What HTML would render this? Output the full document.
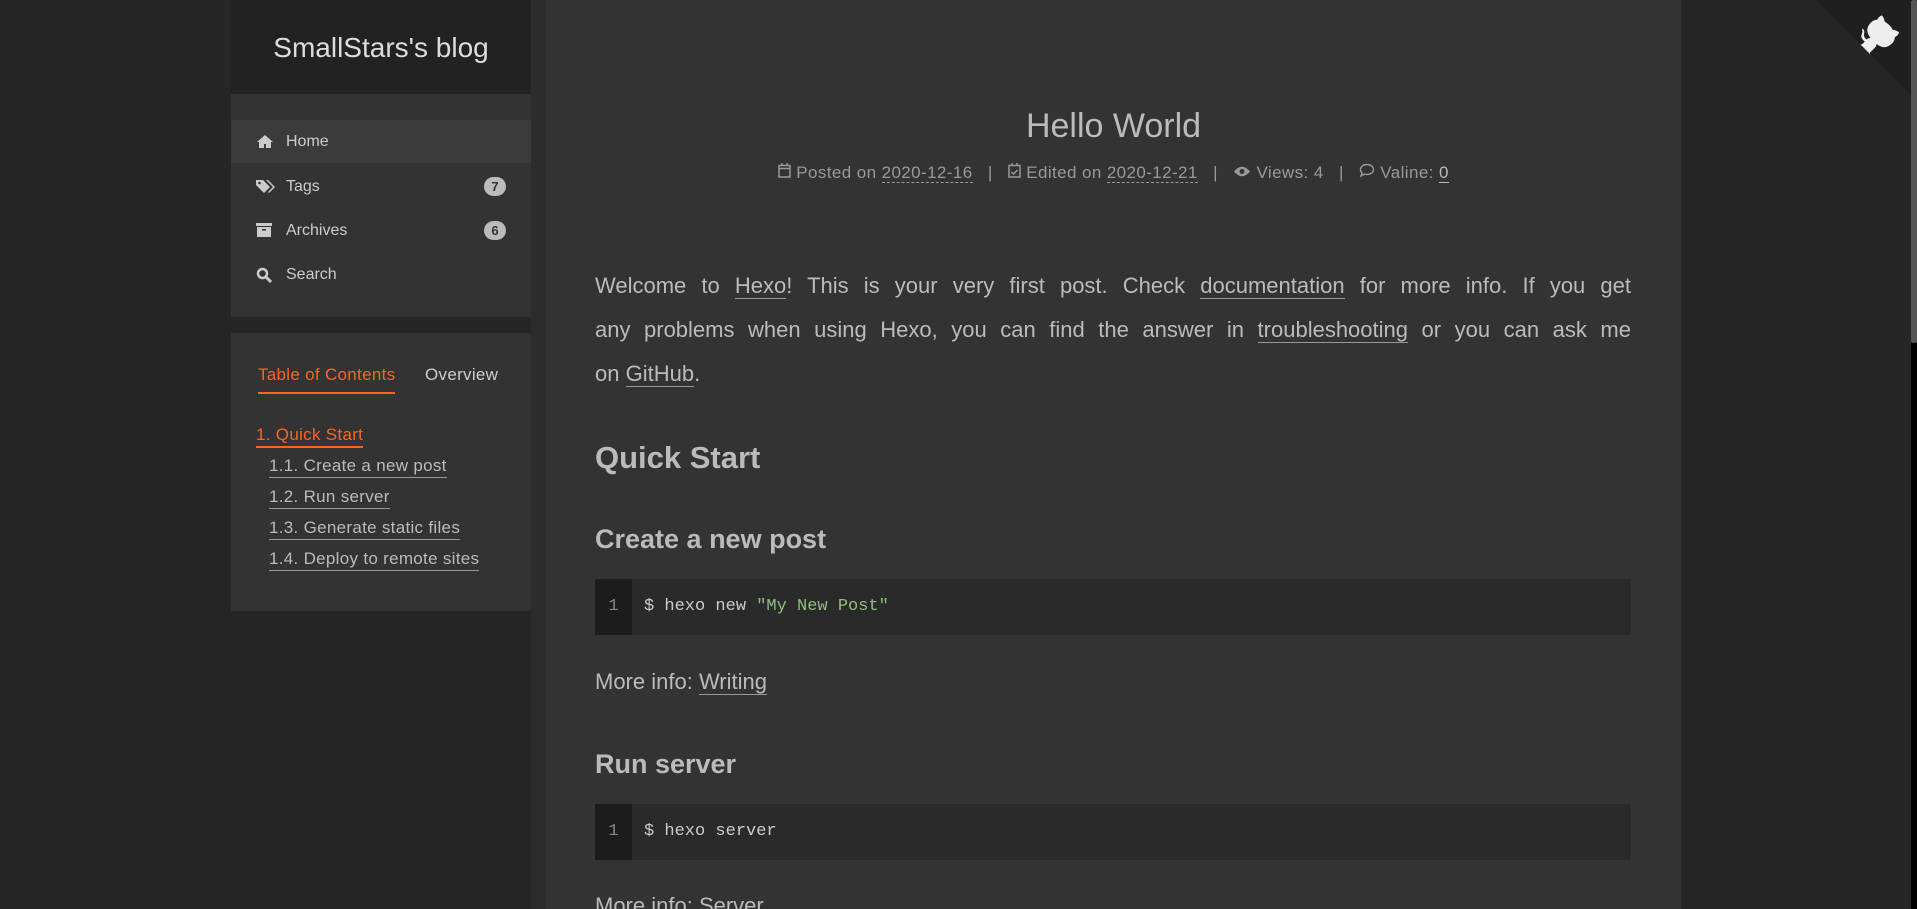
<!DOCTYPE html>
<html><head><meta charset="utf-8"><style>
*{margin:0;padding:0;box-sizing:border-box}
html,body{width:1917px;height:909px;overflow:hidden;background:#262626;font-family:"Liberation Sans",sans-serif;color:#bbb}
#w{position:relative;width:1917px;height:909px;overflow:hidden}
.abs{position:absolute}
a{color:#bbb;text-decoration:none}
.sb{left:231px;width:300px}
.head{top:0;height:94px;background:#222;text-align:center;line-height:96px;font-size:28px;color:#ddd}
.menu{top:94px;height:223px;background:#333}
.mi{position:absolute;left:0;width:300px;height:43px;line-height:43px;font-size:16px;color:#ccc;padding-left:55px}
.mi svg{position:absolute;left:25px;top:14px}
.badge{position:absolute;right:25px;top:12px;width:22px;height:19px;border-radius:10px;background:#bbb;color:#333;font-size:13px;line-height:19px;text-align:center;padding:0;font-weight:bold}
.toc{top:333px;height:278px;background:#333}
.ti{position:absolute;font-size:17px;color:#bbb;border-bottom:1px solid #999;line-height:22px;letter-spacing:0.3px}
.main{left:546px;top:0;width:1135px;height:909px;background:#333}
.p{position:absolute;left:595px;width:1036px;font-size:22px;line-height:44px;color:#bbb}
.p div{text-align:justify;text-align-last:justify;white-space:nowrap;height:44px}
.p a{border-bottom:1px solid #999}
h2,h3{position:absolute;left:595px;color:#bbb;font-weight:bold}
.code{position:absolute;left:595px;width:1036px;height:56px;background:#2a2a2a;font-family:"Liberation Mono",monospace;font-size:17px;line-height:56px;color:#ccc}
.code .g{position:absolute;left:0;top:0;width:37px;height:56px;background:#1c1c1c;text-align:center;color:#888}
.code .c{position:absolute;left:49px}
.meta{position:absolute;left:546px;width:1135px;top:163px;text-align:center;font-size:17px;color:#999;letter-spacing:0.4px}
.meta u{text-decoration:none;border-bottom:1px dashed #999}
</style></head><body><div id="w">
<div class="abs" style="left:531px;top:0;width:15px;height:909px;background:#2c2c2c"></div>
<div class="abs sb head">SmallStars's blog</div>
<div class="abs sb menu">
 <div class="mi" style="top:26px;background:#3b3b3b"><svg width="18" height="15" viewBox="0 0 18 15"><path d="M9 1L1 8h2v6h5v-4h2v4h5V8h2z" fill="#ccc"/></svg>Home</div>
 <div class="mi" style="top:71px"><svg width="20" height="15" viewBox="0 0 20 15"><path d="M0 1h7l7 7-6 6-8-8z M10 1h2l7 7-6 6-1-1 5-5z" fill="#ccc"/><circle cx="3.5" cy="4" r="1.3" fill="#333"/></svg>Tags<span class="badge">7</span></div>
 <div class="mi" style="top:115px"><svg width="16" height="14" viewBox="0 0 16 14"><path d="M0 0h16v3H0zM1 4h14v10H1z" fill="#ccc"/><rect x="6" y="6" width="4" height="1.5" fill="#333"/></svg>Archives<span class="badge">6</span></div>
 <div class="mi" style="top:159px"><svg width="16" height="16" viewBox="0 0 16 16"><circle cx="6.5" cy="6.5" r="4.5" stroke="#ccc" stroke-width="2.5" fill="none"/><path d="M10 10l5 5" stroke="#ccc" stroke-width="3"/></svg>Search</div>
</div>
<div class="abs sb toc">
 <div class="ti" style="left:27px;top:31px;color:#fc6423;border-bottom:2px solid #fc6423;padding-bottom:6px">Table of Contents</div>
 <div class="ti" style="left:194px;top:31px;border:0;color:#ccc">Overview</div>
 <div class="ti" style="left:25px;top:91px;color:#fc6423;border-bottom:2px solid #fc6423">1. Quick Start</div>
 <div class="ti" style="left:38px;top:122px">1.1. Create a new post</div>
 <div class="ti" style="left:38px;top:153px">1.2. Run server</div>
 <div class="ti" style="left:38px;top:184px">1.3. Generate static files</div>
 <div class="ti" style="left:38px;top:215px">1.4. Deploy to remote sites</div>
</div>
<div class="abs main"></div>
<div class="abs" style="left:546px;top:107px;width:1135px;text-align:center;font-size:34px;color:#bbb">Hello World</div>
<div class="meta">
<svg width="13" height="15" viewBox="0 0 13 15"><rect x="1" y="2.5" width="11" height="11.5" fill="none" stroke="#999" stroke-width="1.5"/><path d="M1 5.5h11M4 0v3M9 0v3" stroke="#999" stroke-width="1.5"/></svg> Posted on <u>2020-12-16</u> &nbsp;&nbsp;|&nbsp;&nbsp; <svg width="13" height="15" viewBox="0 0 13 15"><rect x="1" y="2.5" width="11" height="11.5" fill="none" stroke="#999" stroke-width="1.5"/><path d="M4 0v3M9 0v3M3.5 9l2 2 4-4" stroke="#999" stroke-width="1.5" fill="none"/></svg> Edited on <u>2020-12-21</u> &nbsp;&nbsp;|&nbsp;&nbsp; <svg width="18" height="13" viewBox="0 0 18 13"><path d="M1 6.5Q9-3 17 6.5Q9 16 1 6.5z" fill="#999"/><circle cx="9" cy="6.5" r="2.5" fill="#333"/></svg> Views: 4 &nbsp;&nbsp;|&nbsp;&nbsp; <svg width="16" height="15" viewBox="0 0 16 15"><path d="M8 1.5c4 0 6.5 2.3 6.5 5s-2.5 5-6.5 5c-1 0-2-.2-2.7-.5L2 13l1-3C2 9 1.5 7.8 1.5 6.5 1.5 3.8 4 1.5 8 1.5z" fill="none" stroke="#999" stroke-width="1.4"/></svg> Valine: <span style="border-bottom:1px solid #bbb;color:#bbb">0</span>
</div>
<div class="p" style="top:264px">
<div>Welcome to <a>Hexo</a>! This is your very first post. Check <a>documentation</a> for more info. If you get</div>
<div>any problems when using Hexo, you can find the answer in <a>troubleshooting</a> or you can ask me</div>
<div style="text-align-last:left">on <a>GitHub</a>.</div>
</div>
<h2 style="top:440px;font-size:31px">Quick Start</h2>
<h3 style="top:524px;font-size:27px">Create a new post</h3>
<div class="code" style="top:579px"><div class="g">1</div><div class="c">$ hexo new <span style="color:#8fbf7f">"My New Post"</span></div></div>
<div class="p" style="top:660px">More info: <a>Writing</a></div>
<h3 style="top:749px;font-size:27px">Run server</h3>
<div class="code" style="top:804px"><div class="g">1</div><div class="c">$ hexo server</div></div>
<div class="p" style="top:884px">More info: <a>Server</a></div>
<svg class="abs" style="left:1816px;top:0" width="96" height="96" viewBox="0 0 250 250"><path d="M0,0 L250,250 L250,0 Z" fill="#1f1f1f"/><path d="M128.3,109.0 C113.8,99.7 119.0,89.6 119.0,89.6 C122.0,82.7 120.5,78.6 120.5,78.6 C119.2,72.0 123.4,76.3 123.4,76.3 C127.3,80.9 125.5,87.3 125.5,87.3 C122.9,97.6 130.6,101.9 134.4,103.2" fill="#eee"/><path d="M115,115 C114.9,115.1 118.7,116.5 119.8,115.4 L133.7,101.6 C136.9,99.2 139.9,98.4 142.2,98.6 C133.8,88 127.5,74.4 143.8,58 C148.5,53.4 154,51.2 159.7,51 C160.3,49.4 163.2,43.6 171.4,40.1 C171.4,40.1 176.1,42.5 178.8,56.2 C183.1,58.6 187.2,61.8 190.9,65.4 C194.5,69 197.7,73.2 200.1,77.6 C213.8,80.2 216.3,84.9 216.3,84.9 C212.7,93.1 206.9,96 205.4,96.6 C205.1,102.4 203,107.8 198.3,112.5 C181.9,128.9 168.3,122.5 157.7,114.1 C157.9,116.9 156.7,120.9 152.7,124.9 L141,136.5 C139.8,137.7 141.6,141.9 141.8,141.8 Z" fill="#eee"/></svg>
<div class="abs" style="left:1911px;top:0;width:6px;height:909px;background:#000"></div>
<div class="abs" style="left:1911px;top:0;width:6px;height:343px;background:#555;border-radius:2px"></div>
</div></body></html>
